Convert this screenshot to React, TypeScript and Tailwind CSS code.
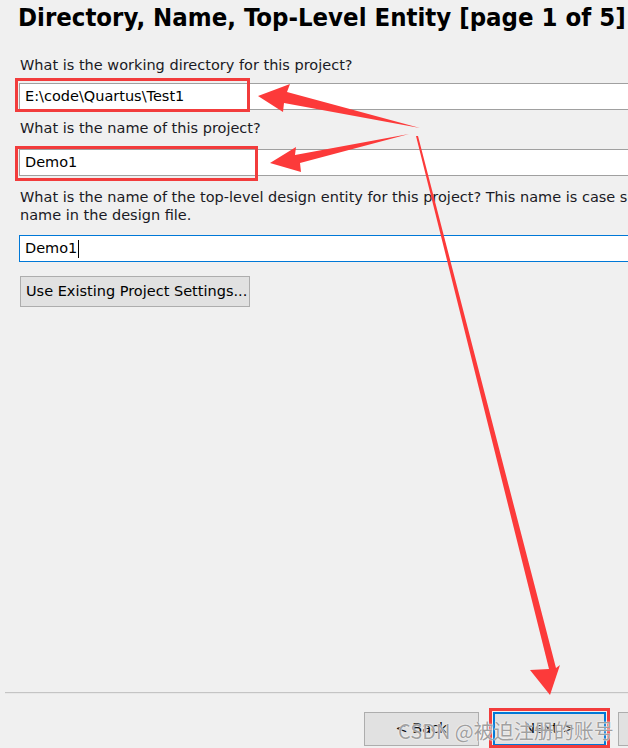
import React from 'react';

const ui = { fontFamily: '"DejaVu Sans", Tahoma, sans-serif' };

const Label: React.FC<{ children: React.ReactNode }> = ({ children }) => (
  <div className="pl-[4px] text-[14.5px] leading-[17px] text-[#1a1a24] whitespace-nowrap">{children}</div>
);

const Field: React.FC<{ value: string; focused?: boolean; caret?: boolean }> = ({ value, focused, caret }) => (
  <div
    className={
      'h-[27px] ml-[3px] w-[640px] bg-white flex items-center px-[5px] text-[14.5px] text-black ' +
      (focused ? 'border border-[#0078d7]' : 'border-y border-l border-[#a0a0a0]')
    }
  >
    {value}
    {caret && <span className="inline-block w-[1px] h-[18px] bg-black ml-[1px]" />}
  </div>
);

const Arrows = () => (
  <svg className="absolute inset-0 pointer-events-none" width="628" height="748" viewBox="0 0 628 748">
    {/* to working directory */}
    <polygon points="258,96 290,84 287,92 420,128 284,103 283,112" fill="#fc3a3a" />
    {/* to project name */}
    <polygon points="270,163 296,147 295,155 409,134 300,163 301,172" fill="#fc3a3a" />
    {/* down to Next */}
    <polygon points="416,136 418,136 556,668 560,665 550,695 530,670 549,669" fill="#fc3a3a" />
  </svg>
);

export default function App() {
  return (
    <div className="relative w-[628px] h-[748px] overflow-hidden bg-[#f0f0f0]" style={ui}>
      <div className="flex flex-col h-full">
        <div
          className="pl-[18px] pt-[2px] h-[34px] text-[25.5px] font-bold text-black whitespace-nowrap leading-[30px]"
          style={{ fontFamily: '"DejaVu Sans Condensed", "DejaVu Sans", sans-serif' }}
        >
          Directory, Name, Top-Level Entity [page 1 of 5]
        </div>

        <div className="flex flex-col pl-[16px] pt-[23px]">
          <Label>What is the working directory for this project?</Label>
          <div className="mt-[9px] relative">
            <Field value="E:\code\Quartus\Test1" />
            <div className="absolute left-[-1px] top-[-5px] w-[235px] h-[34px] border-[3px] border-[#f23c3c]" />
          </div>

          <div className="mt-[10px]">
            <Label>What is the name of this project?</Label>
          </div>
          <div className="mt-[12px] relative">
            <Field value="Demo1" />
            <div className="absolute left-[-1px] top-[-3px] w-[243px] h-[35px] border-[3px] border-[#f23c3c]" />
          </div>

          <div className="mt-[13px] flex flex-col gap-[1px]">
            <Label>
              What is the name of the top-level design entity for this project? This name is case sensitive and must exactly match the entity
            </Label>
            <Label>name in the design file.</Label>
          </div>
          <div className="mt-[11px]">
            <Field value="Demo1" focused caret />
          </div>

          <button className="mt-[14px] ml-[4px] w-[230px] h-[31px] bg-[#e1e1e1] border border-[#adadad] text-[14.5px] text-black text-left pl-[5px]">
            Use Existing Project Settings...
          </button>
        </div>

        <div className="flex-1" />

        <div className="ml-[5px] h-[2px] bg-[#c4c4c4] border-b border-[#e8e8e8]" />

        <div className="relative flex items-center pl-[364px] pt-[18px] pb-[2px]">
          <button className="shrink-0 w-[115px] h-[34px] bg-[#e1e1e1] border border-[#adadad] text-[14.5px] text-black">
            &lt; Back
          </button>
          <div className="relative shrink-0 ml-[14px]">
            <button className="w-[113px] h-[34px] bg-[#e1e1e1] border-2 border-[#0078d7] text-[14.5px] text-black">
              Next &gt;
            </button>
            <div className="absolute left-[-4px] top-[-4px] w-[121px] h-[40px] border-[3px] border-[#f23c3c]" />
          </div>
          <button className="shrink-0 ml-[12px] w-[40px] h-[34px] bg-[#e1e1e1] border border-[#adadad]" />
          <div
            className="absolute left-[398px] top-[22px] text-[20px] text-[#a0a0a0] whitespace-nowrap"
            style={{ fontFamily: '"Noto Sans CJK SC", "DejaVu Sans", sans-serif', textShadow: '0 0 2px #fff, 0 0 1px #fff' }}
          >
            CSDN @被迫注册的账号
          </div>
        </div>
      </div>
      <Arrows />
    </div>
  );
}
